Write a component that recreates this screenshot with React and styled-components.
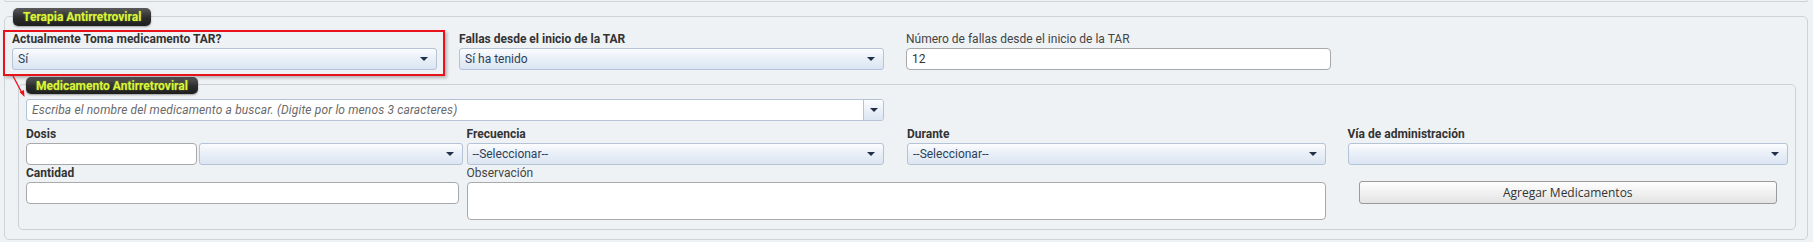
import React from "react";
import styled, { createGlobalStyle } from "styled-components";

const Global = createGlobalStyle`
  html, body { margin: 0; padding: 0; background: #eff2f5; }
  body { font-family: Roboto, "Liberation Sans", Arial, sans-serif; font-size: 12px; color: #333; }
  * { box-sizing: border-box; }
`;

const Page = styled.div`
  width: 1813px;
  height: 242px;
  padding: 0 5px 0 4px;
  overflow: hidden;
`;

const TopEdge = styled.div`
  height: 2px;
  border: 1px solid #cfd3d7;
  border-top: none;
  border-radius: 0 0 5px 5px;
`;

const Box = styled.div`
  border: 1px solid ${(p) => (p.$inner ? "#cdd1d5" : "#cfd3d7")};
  border-radius: 5px;
  margin-top: ${(p) => p.$mt}px;
  margin-right: ${(p) => p.$mr || 0}px;
  margin-left: ${(p) => p.$ml || 0}px;
  padding: 0 7px 9px 7px;
`;

const Legend = styled.div`
  display: flex;
  align-items: center;
  width: max-content;
  height: ${(p) => p.$h}px;
  margin-top: ${(p) => p.$mt}px;
  margin-left: ${(p) => p.$ml || 0}px;
  padding: 0 10px;
  border-radius: 5px;
  background: linear-gradient(#5a5a5a, #2c2c2c 55%, #1e1e1e);
  box-shadow: 0 1px 2px rgba(0, 0, 0, 0.35);
  color: #d9f53a;
  font-weight: 700;
  font-size: 12px;
  letter-spacing: 0;
  text-shadow: 0 0 2px rgba(220, 250, 60, 0.45);
`;

const Grid = styled.div`
  display: grid;
  grid-template-columns: repeat(4, 1fr);
  margin-top: ${(p) => p.$mt || 0}px;
`;

const Field = styled.div`
  position: relative;
  grid-column: ${(p) => p.$col || "auto"};
  padding-left: ${(p) => p.$pl || 0}px;
  padding-right: ${(p) => p.$pr || 0}px;
  display: flex;
  flex-direction: column;
`;

const Highlight = styled.div`
  position: absolute;
  left: -9px;
  top: -2px;
  right: 14px;
  bottom: -6px;
  border: 2px solid #e8121b;
  box-shadow: 2px 2px 3px rgba(0, 0, 0, 0.25);
  pointer-events: none;
`;

const ArrowSvg = styled.svg`
  position: absolute;
  left: -2px;
  top: 43px;
  overflow: visible;
`;

const Label = styled.label`
  display: block;
  height: 15px;
  line-height: 15px;
  margin-bottom: 1px;
  font-size: 12px;
  font-weight: ${(p) => (p.$plain ? 400 : 700)};
  color: ${(p) => (p.$plain ? "#444" : "#333")};
  white-space: nowrap;
`;

const SelectBox = styled.div`
  position: relative;
  flex: ${(p) => (p.$grow ? 1 : "none")};
  width: ${(p) => p.$w || "100%"};
  height: 22px;
  border: 1px solid #b5c3d6;
  border-radius: 3px;
  background: linear-gradient(#fbfcfe, #eaf0f8 45%, #dbe5f2);
  color: #2c3f5a;
  font-size: 12px;
  line-height: 20px;
  padding: 0 24px 0 5px;
  white-space: nowrap;
`;

const Caret = styled.span`
  position: absolute;
  right: 8px;
  top: 8px;
  width: 0;
  height: 0;
  border-left: 4px solid transparent;
  border-right: 4px solid transparent;
  border-top: 4px solid #1f3048;
`;

const TextBox = styled.div`
  width: ${(p) => p.$w || "100%"};
  height: ${(p) => p.$h || 22}px;
  border: 1px solid #a9a9a9;
  border-radius: 4px;
  background: #fff;
  color: #333;
  font-size: 12px;
  line-height: 20px;
  padding: 0 5px;
  flex: none;
`;

const Combo = styled.div`
  display: flex;
  gap: 2px;
`;

const Search = styled.div`
  display: flex;
  height: 22px;
  border: 1px solid #b5c3d6;
  border-radius: 3px;
  background: #fff;
  overflow: hidden;
`;

const SearchText = styled.div`
  flex: 1;
  padding: 0 5px;
  line-height: 20px;
  font-style: italic;
  color: #6a6a6a;
  font-size: 12px;
  letter-spacing: 0.14px;
  white-space: nowrap;
`;

const SearchBtn = styled.div`
  position: relative;
  width: 20px;
  border-left: 1px solid #b5c3d6;
  background: linear-gradient(#fbfcfe, #dbe5f2);
  & > span {
    right: 5px;
  }
`;

const Button = styled.div`
  margin-top: 15px;
  height: 23px;
  border: 1px solid #9a9a9a;
  border-radius: 3px;
  background: linear-gradient(#fefefe, #f1f1f1 50%, #e3e3e3);
  font-family: "Open Sans", "Liberation Sans", sans-serif;
  font-size: 12px;
  color: #333;
  display: flex;
  align-items: center;
  justify-content: center;
`;

export default function App() {
  return (
    <>
      <Global />
      <Page>
        <TopEdge />
        <Box $mt={14}>
          <Legend $h={18} $mt={-9} $ml={1}>Terapia Antirretroviral</Legend>
          <Grid $mt={6}>
            <Field>
              <Label>Actualmente Toma medicamento TAR?</Label>
              <SelectBox $w="95%">Sí<Caret /></SelectBox>
              <Highlight />
              <ArrowSvg width="18" height="24" viewBox="0 0 18 24">
                <line x1="3" y1="1" x2="12" y2="18" stroke="#e8121b" strokeWidth="1.3" />
                <polygon points="14.5,22 9.5,17 14,15" fill="#e8121b" />
              </ArrowSvg>
            </Field>
            <Field>
              <Label>Fallas desde el inicio de la TAR</Label>
              <SelectBox $w="95%">Sí ha tenido<Caret /></SelectBox>
            </Field>
            <Field>
              <Label $plain>Número de fallas desde el inicio de la TAR</Label>
              <TextBox $w="95%">12</TextBox>
            </Field>
          </Grid>
          <Box $inner $mt={14} $ml={6} $mr={4}>
            <Legend $h={17} $mt={-8}>Medicamento Antirretroviral</Legend>
            <Grid $mt={5}>
              <Field $col="1 / span 2" $pr={23}>
                <Search>
                  <SearchText>Escriba el nombre del medicamento a buscar. (Digite por lo menos 3 caracteres)</SearchText>
                  <SearchBtn><Caret /></SearchBtn>
                </Search>
              </Field>
            </Grid>
            <Grid $mt={6}>
              <Field $pr={4}>
                <Label>Dosis</Label>
                <Combo>
                  <TextBox $w="171px" />
                  <SelectBox $grow><Caret /></SelectBox>
                </Combo>
              </Field>
              <Field $pr={23}>
                <Label>Frecuencia</Label>
                <SelectBox>--Seleccionar--<Caret /></SelectBox>
              </Field>
              <Field $pr={22}>
                <Label>Durante</Label>
                <SelectBox>--Seleccionar--<Caret /></SelectBox>
              </Field>
              <Field>
                <Label>Vía de administración</Label>
                <SelectBox><Caret /></SelectBox>
              </Field>
            </Grid>
            <Grid $mt={1}>
              <Field $pr={8}>
                <Label>Cantidad</Label>
                <TextBox />
              </Field>
              <Field $col="2 / span 2" $pr={22}>
                <Label $plain>Observación</Label>
                <TextBox $h={38} />
              </Field>
              <Field $pl={11} $pr={11}>
                <Button>Agregar Medicamentos</Button>
              </Field>
            </Grid>
          </Box>
        </Box>
      </Page>
    </>
  );
}
